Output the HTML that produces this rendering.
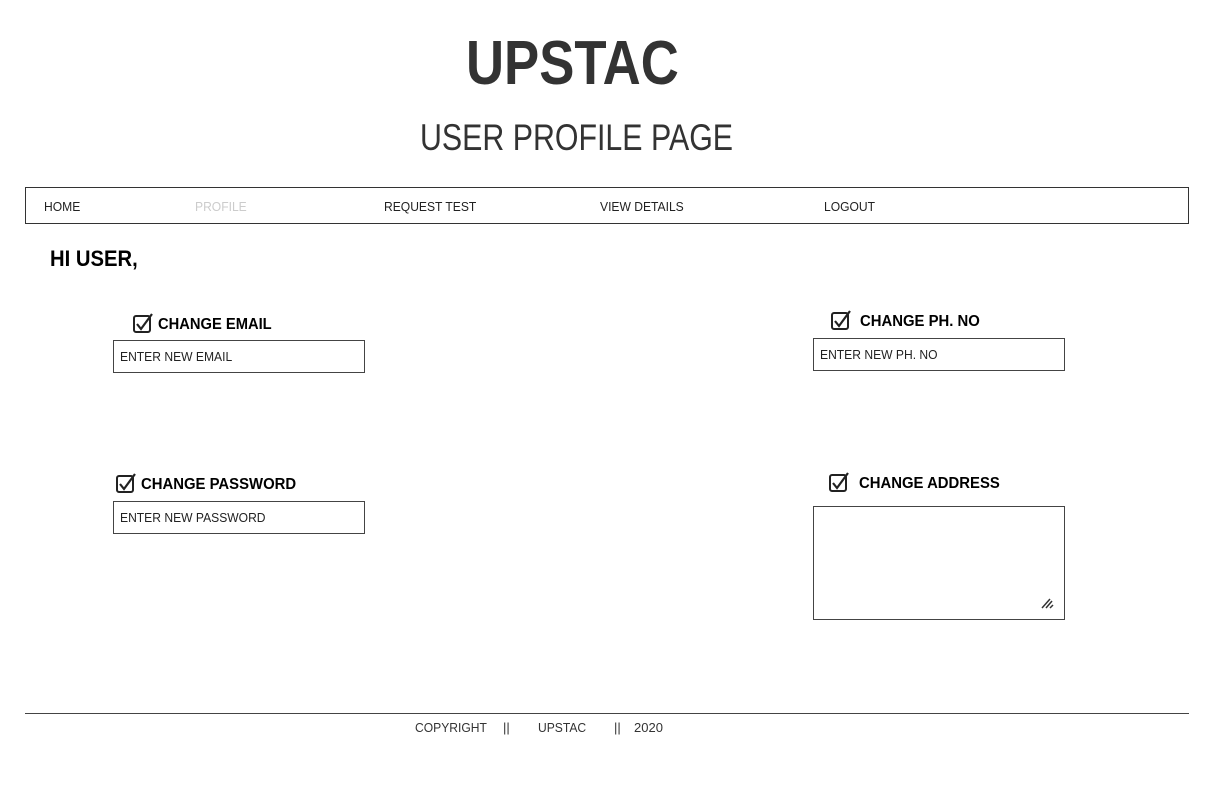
<!DOCTYPE html>
<html><head><style>
body{margin:0;width:1226px;height:803px;background:#fff;font-family:"Liberation Sans",sans-serif;position:relative;overflow:hidden;color:#000}
.a{position:absolute;white-space:nowrap}
.sx{display:inline-block;transform-origin:left top}
.nav{position:absolute;left:25px;top:187px;width:1162px;height:35px;border:1px solid #333}
.nav span{position:absolute;top:11px;font-size:13px;color:#222;display:inline-block;transform:scaleX(0.93);transform-origin:left top}
.lab{font-weight:bold;font-size:16px;color:#000}
.inp{position:absolute;width:252px;height:33px;box-sizing:border-box;border:1.5px solid #444;font-size:13px;color:#222;padding:8px 0 0 6px}
.inp span{display:inline-block;transform:scaleX(0.93);transform-origin:left top}
</style></head><body>
<div class="a" style="left:466px;top:28px;font-size:62px;font-weight:bold;color:#333"><span class="sx" style="transform:scaleX(0.85)">UPSTAC</span></div>
<div class="a" style="left:420px;top:117px;font-size:37px;color:#333"><span class="sx" style="transform:scaleX(0.82)">USER PROFILE PAGE</span></div>
<div class="nav">
<span style="left:18px">HOME</span>
<span style="left:169px;color:#ccc">PROFILE</span>
<span style="left:358px">REQUEST TEST</span>
<span style="left:574px">VIEW DETAILS</span>
<span style="left:798px">LOGOUT</span>
</div>
<div class="a" style="left:50px;top:246px;font-size:22px;font-weight:bold"><span class="sx" style="transform:scaleX(0.92)">HI USER,</span></div>

<svg class="a" style="left:133px;top:313px" width="22" height="20"><rect x="1" y="3" width="16" height="16" rx="2" fill="none" stroke="#222" stroke-width="2"/><path d="M4 11 L8 16 L19 1" fill="none" stroke="#222" stroke-width="2.2"/></svg>
<div class="a lab" style="left:158px;top:316px"><span class="sx" style="transform:scaleX(0.92)">CHANGE EMAIL</span></div>
<div class="inp" style="left:113px;top:340px"><span>ENTER NEW EMAIL</span></div>

<svg class="a" style="left:116px;top:473px" width="22" height="20"><rect x="1" y="3" width="16" height="16" rx="2" fill="none" stroke="#222" stroke-width="2"/><path d="M4 11 L8 16 L19 1" fill="none" stroke="#222" stroke-width="2.2"/></svg>
<div class="a lab" style="left:141px;top:476px"><span class="sx" style="transform:scaleX(0.93)">CHANGE PASSWORD</span></div>
<div class="inp" style="left:113px;top:501px"><span>ENTER NEW PASSWORD</span></div>

<svg class="a" style="left:831px;top:310px" width="22" height="20"><rect x="1" y="3" width="16" height="16" rx="2" fill="none" stroke="#222" stroke-width="2"/><path d="M4 11 L8 16 L19 1" fill="none" stroke="#222" stroke-width="2.2"/></svg>
<div class="a lab" style="left:860px;top:313px"><span class="sx" style="transform:scaleX(0.93)">CHANGE PH. NO</span></div>
<div class="inp" style="left:813px;top:338px"><span>ENTER NEW PH. NO</span></div>

<svg class="a" style="left:829px;top:472px" width="22" height="20"><rect x="1" y="3" width="16" height="16" rx="2" fill="none" stroke="#222" stroke-width="2"/><path d="M4 11 L8 16 L19 1" fill="none" stroke="#222" stroke-width="2.2"/></svg>
<div class="a lab" style="left:859px;top:475px"><span class="sx" style="transform:scaleX(0.93)">CHANGE ADDRESS</span></div>
<div class="inp" style="left:813px;top:506px;height:114px;width:252px;padding:0"></div>
<svg class="a" style="left:1040px;top:596px" width="16" height="14"><path d="M2 12 L10 3 M6 12 L12 5 M10 12 L13 9" stroke="#333" stroke-width="1.5"/></svg>

<div class="a" style="left:25px;top:713px;width:1164px;border-top:1.5px solid #444"></div>
<div class="a" style="left:415px;top:720px;font-size:13px;color:#333"><span class="sx" style="transform:scaleX(0.93)">COPYRIGHT</span></div>
<div class="a" style="left:503px;top:720px;font-size:13px;color:#333">||</div>
<div class="a" style="left:538px;top:720px;font-size:13px;color:#333"><span class="sx" style="transform:scaleX(0.93)">UPSTAC</span></div>
<div class="a" style="left:614px;top:720px;font-size:13px;color:#333">||</div>
<div class="a" style="left:634px;top:720px;font-size:13px;color:#333">2020</div>
</body></html>
